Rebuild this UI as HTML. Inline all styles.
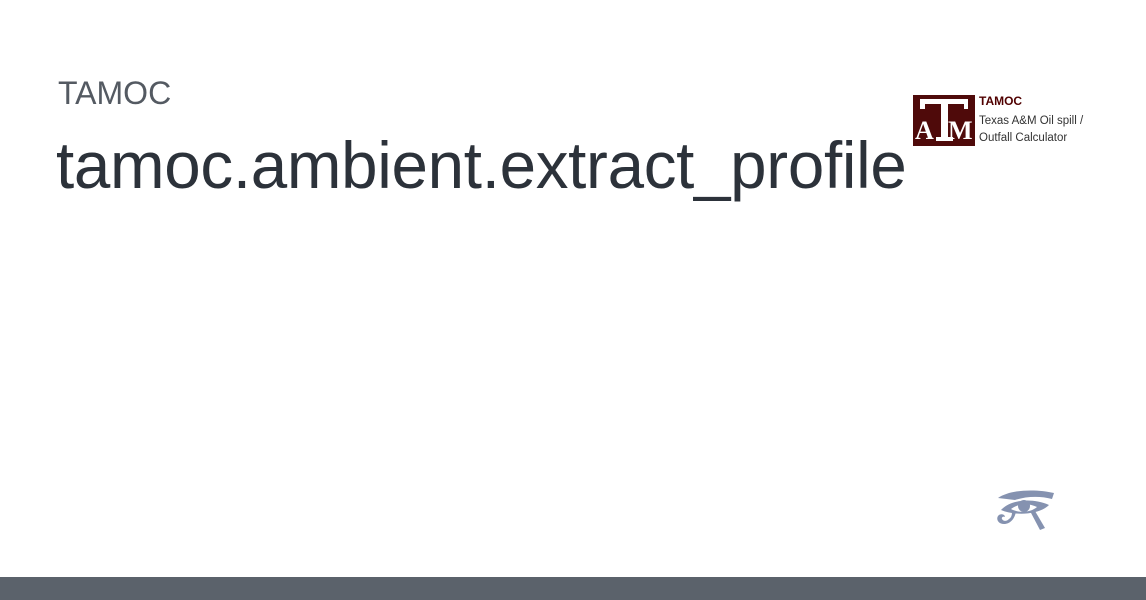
<!DOCTYPE html>
<html><head><meta charset="utf-8"><style>
body{margin:0;width:1146px;height:600px;background:#fff;position:relative;overflow:hidden;font-family:"Liberation Sans",sans-serif}
.t1{position:absolute;left:58px;top:73px;font-size:32px;color:#545a62;line-height:40px}
.t2{position:absolute;left:56px;top:128px;font-size:65.5px;color:#2c323a;line-height:76px;letter-spacing:-0.3px}
.bar{position:absolute;left:0;top:577px;width:1146px;height:23px;background:#5b626b}
.logo{position:absolute;left:913px;top:95px;width:62px;height:51px;background:#4f0a0a}
.lt{position:absolute;left:979px;font-size:11.5px;color:#333;line-height:15px;white-space:nowrap}
</style></head><body>
<div class="t1">TAMOC</div>
<div class="t2">tamoc.ambient.extract_profile</div>
<div class="logo"><svg width="62" height="51" viewBox="0 0 62 51">
<path d="M7 4h48v10h-4v-5h-16v33h5v4h-17v-4h5v-33h-16v5h-5z" fill="#fff"/>
<text x="2" y="44" font-family="Liberation Serif" font-weight="bold" font-size="26" fill="#fff">A</text>
<text x="35" y="44" font-family="Liberation Serif" font-weight="bold" font-size="26" fill="#fff">M</text>
</svg></div>
<div class="lt" style="top:94px;font-weight:bold;color:#500000;font-size:12px">TAMOC</div>
<div class="lt" style="top:114px">Texas A&amp;M Oil spill /</div>
<div class="lt" style="top:131px">Outfall Calculator</div>
<svg style="position:absolute;left:997px;top:489px" width="58" height="44" viewBox="0 0 58 44">
<g fill="#8592b0">
<path d="M1 9C14 0 40 0 57 4l-2 6C44 7 30 7 18 11z"/>
<path d="M4 21C14 10 36 9 52 16C42 26 18 27 4 21zM14 20c7 4 19 4 26 -2c-8 -4 -18 -4 -26 2z"/>
<circle cx="27" cy="17" r="6"/>
<path d="M19 22c-1 8 -6 13 -12 13c-6 0 -8 -5 -6 -8c2 -3 7 -2 7 1c-1 -1 -4 0 -3 2c1 2 4 3 7 0c3 -2 3 -5 3 -8z"/>
<path d="M33 22l10 19l5 -2l-10 -17z"/>
</g></svg>
<div class="bar"></div>
</body></html>
